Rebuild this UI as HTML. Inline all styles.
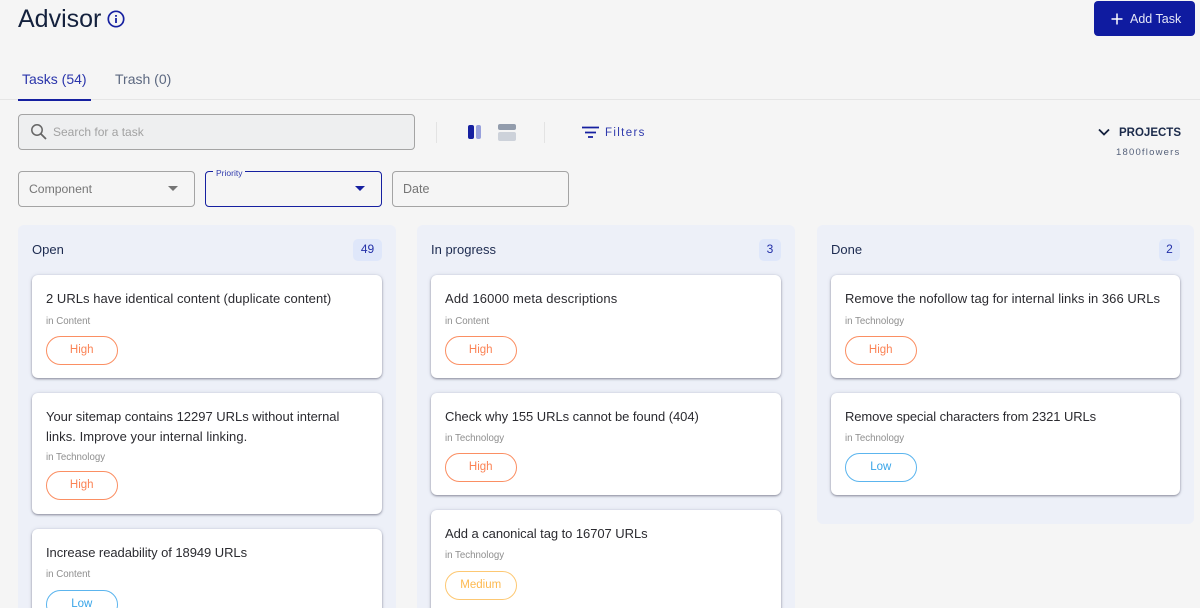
<!DOCTYPE html>
<html><head><meta charset="utf-8"><style>
*{box-sizing:border-box}
html,body{margin:0;padding:0;width:1200px;height:608px;overflow:hidden}
body{background:#f5f5f5;font-family:"Liberation Sans",sans-serif;color:#2a2a33}
#w{position:relative;width:1200px;height:608px;overflow:hidden;background:#f5f5f5}
.a{position:absolute;white-space:nowrap}
.col{position:absolute;background:#edf0f8;border-radius:6px;top:225px;width:378px}
.head{position:absolute;font-size:13px;top:243px;color:#1d2b50;line-height:14px}
.cnt{position:absolute;top:239px;height:22px;background:#dfe7fa;border-radius:5px;color:#2330a8;font-size:12px;line-height:21px;text-align:center}
.card{position:absolute;background:#fff;border-radius:6px;box-shadow:0 1px 2px rgba(60,60,80,.55),0 0 5px rgba(80,90,130,.12);width:350px}
.t{position:absolute;left:14px;font-size:13px;line-height:20px;color:#2b2b30;white-space:nowrap;top:14px}
.s{position:absolute;left:14px;font-size:9.7px;line-height:12px;color:#8e8e8e;white-space:nowrap}
.p{position:absolute;left:14px;width:71.500px;height:29px;border-radius:15px;border:1px solid;font-size:11.5px;line-height:26px;text-align:center;background:#fff}
.h{border-color:#fb8f63;color:#fb8355}.l{border-color:#5cb5ee;color:#37a4e8}.m{border-color:#fdc873;color:#fdb94f}
.box{position:absolute;border:1px solid #a4a4a4;border-radius:4px}
</style></head><body><div id="w">
<div class="a" style="left:18px;top:3px;font-size:25px;line-height:32px;color:#14213d">Advisor</div>
<svg class="a" style="left:107px;top:10px" width="18" height="18" viewBox="0 0 18 18"><circle cx="9" cy="9" r="7.7" fill="none" stroke="#1620a0" stroke-width="1.7"/><rect x="8.1" y="8" width="1.8" height="5" fill="#1620a0"/><rect x="8.1" y="5" width="1.8" height="1.8" fill="#1620a0"/></svg>
<div class="a" style="left:1094px;top:1px;width:101px;height:35px;background:#0f1ba0;border-radius:4px"></div>
<svg class="a" style="left:1110px;top:12px" width="14" height="14" viewBox="0 0 14 14"><path d="M7 1.5V12.500M1.500 7H12.500" stroke="#fff" stroke-width="1.500"/></svg>
<div class="a" style="left:1130px;top:12px;font-size:12.5px;line-height:15px;color:#e6e8f8">Add Task</div>

<div class="a" style="left:22px;top:71px;font-size:14px;line-height:16px;color:#2a35ab">Tasks (54)</div>
<div class="a" style="left:115px;top:71px;font-size:14px;line-height:16px;color:#5c6880">Trash (0)</div>
<div class="a" style="left:0;top:99px;width:1200px;height:1px;background:#e5e5e5"></div>
<div class="a" style="left:18px;top:99px;width:73px;height:2px;background:#1620a0"></div>

<div class="box" style="left:18px;top:114px;width:397px;height:36px;background:#eeeff0"></div>
<svg class="a" style="left:30px;top:123px" width="18" height="18" viewBox="0 0 18 18"><circle cx="7" cy="7" r="5.200" fill="none" stroke="#666" stroke-width="1.500"/><path d="M11 11L16 16" stroke="#666" stroke-width="1.800"/></svg>
<div class="a" style="left:53px;top:125px;font-size:12px;line-height:14px;color:#a2a2a2">Search for a task</div>
<div class="a" style="left:436px;top:122px;width:1px;height:21px;background:#e3e3e3"></div>
<div class="a" style="left:544px;top:122px;width:1px;height:21px;background:#e3e3e3"></div>
<div class="a" style="left:468px;top:125px;width:5.500px;height:14px;background:#1620a0;border-radius:2px"></div>
<div class="a" style="left:475.500px;top:125px;width:5.500px;height:14px;background:#98a1dc;border-radius:2px"></div>
<div class="a" style="left:497.500px;top:124px;width:18px;height:5.500px;background:#929cac;border-radius:2px"></div>
<div class="a" style="left:497.500px;top:132px;width:18px;height:8.500px;background:#cdd2da;border-radius:2px"></div>
<svg class="a" style="left:582px;top:126px" width="17" height="13" viewBox="0 0 17 13"><path d="M0 1.500H17M3 6.500H14M6 11H11" stroke="#1620a0" stroke-width="1.700"/></svg>
<div class="a" style="left:605px;top:126px;font-size:11.500px;line-height:14px;color:#2f3aad;letter-spacing:1.350px">Filters</div>

<svg class="a" style="left:1098px;top:128px" width="12" height="9" viewBox="0 0 12 9"><path d="M1 1.500L6 6.500L11 1.500" fill="none" stroke="#14213d" stroke-width="1.800"/></svg>
<div class="a" style="left:1119px;top:126px;font-size:11.500px;line-height:14px;font-weight:bold;color:#1b2a4a">PROJECTS</div>
<div class="a" style="left:1116px;top:146.500px;font-size:9.500px;line-height:12px;color:#55617a;letter-spacing:1.200px">1800flowers</div>

<div class="box" style="left:18px;top:171px;width:176.500px;height:36px"></div>
<div class="a" style="left:29px;top:182px;font-size:12.200px;line-height:15px;color:#757575">Component</div>
<svg class="a" style="left:168px;top:186px" width="10" height="6"><path d="M0 0H10L5 5Z" fill="#757575"/></svg>
<div class="box" style="left:205px;top:171px;width:177px;height:36px;border-color:#1620a0"></div>
<div class="a" style="left:213px;top:168px;padding:0 3px;background:#f5f5f5;font-size:8.500px;line-height:11px;color:#2f3aad">Priority</div>
<svg class="a" style="left:355px;top:186px" width="10" height="6"><path d="M0 0H10L5 5Z" fill="#1620a0"/></svg>
<div class="box" style="left:392px;top:171px;width:176.500px;height:36px"></div>
<div class="a" style="left:403px;top:182px;font-size:12.500px;line-height:15px;color:#757575">Date</div>

<div class="col" style="left:18px;height:400px"></div>
<div class="col" style="left:417px;height:400px"></div>
<div class="col" style="left:817px;width:377px;height:299px"></div>

<div class="head" style="left:32px">Open</div><div class="cnt" style="left:353px;width:29px">49</div>
<div class="head" style="left:431px">In progress</div><div class="cnt" style="left:759px;width:22px">3</div>
<div class="head" style="left:831px">Done</div><div class="cnt" style="left:1159px;width:21px">2</div>

<div class="card" style="left:32px;top:275px;height:103px"><div class="t" style="letter-spacing:.04px">2 URLs have identical content (duplicate content)</div><div class="s" style="top:41px">in Content</div><div class="p h" style="top:61px">High</div></div>
<div class="card" style="left:32px;top:393px;height:121px"><div class="t"><span style="letter-spacing:-.02px">Your sitemap contains 12297 URLs without internal</span><br><span style="letter-spacing:.05px">links. Improve your internal linking.</span></div><div class="s" style="top:59px">in Technology</div><div class="p h" style="top:78px">High</div></div>
<div class="card" style="left:32px;top:529px;height:100px"><div class="t" style="letter-spacing:-.06px">Increase readability of 18949 URLs</div><div class="s" style="top:40px">in Content</div><div class="p l" style="top:61px">Low</div></div>

<div class="card" style="left:431px;top:275px;height:103px"><div class="t" style="letter-spacing:.15px">Add 16000 meta descriptions</div><div class="s" style="top:41px">in Content</div><div class="p h" style="top:61px">High</div></div>
<div class="card" style="left:431px;top:393px;height:102px"><div class="t" style="letter-spacing:-.05px">Check why 155 URLs cannot be found (404)</div><div class="s" style="top:40px">in Technology</div><div class="p h" style="top:60px">High</div></div>
<div class="card" style="left:431px;top:510px;height:110px"><div class="t" style="letter-spacing:-.06px">Add a canonical tag to 16707 URLs</div><div class="s" style="top:40px">in Technology</div><div class="p m" style="top:61px">Medium</div></div>

<div class="card" style="left:831px;top:275px;width:349px;height:103px"><div class="t" style="letter-spacing:.04px">Remove the nofollow tag for internal links in 366 URLs</div><div class="s" style="top:41px">in Technology</div><div class="p h" style="top:61px">High</div></div>
<div class="card" style="left:831px;top:393px;width:349px;height:102px"><div class="t" style="letter-spacing:-.1px">Remove special characters from 2321 URLs</div><div class="s" style="top:40px">in Technology</div><div class="p l" style="top:60px">Low</div></div>
</div></body></html>
